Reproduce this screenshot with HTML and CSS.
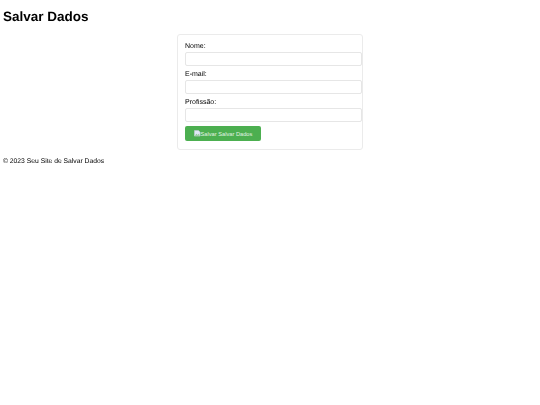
FILE: index.html
```html
<!DOCTYPE html>
<html lang="pt">
<head>
<meta charset="utf-8">
<title>Salvar Dados</title>
<link rel="stylesheet" href="styles.css">
</head>
<body>
<header class="top"><h1>Salvar Dados</h1></header>
<main>
<form class="card">
<label for="nome">Nome:</label>
<input id="nome" type="text">
<label for="email">E-mail:</label>
<input id="email" type="text">
<label for="prof">Profissão:</label>
<input id="prof" type="text">
<button type="button"><svg class="broken" viewBox="0 0 8 8" width="6.5" height="6.5"><path d="M0.5 0.5H5.5L7.5 2.5V7.5H0.5Z" fill="#dfe7f5" stroke="#c4c9d2" stroke-width="0.7"/><path d="M1 7L3 4.5L4.5 6L6 4.5L7 7Z" fill="#8fc78f"/></svg><span>Salvar Salvar Dados</span></button>
</form>
</main>
<footer class="foot">© 2023 Seu Site de Salvar Dados</footer>
</body>
</html>
```
FILE: styles.css
```css
html, body { margin: 0; padding: 0; background: #fff; }
body { font-family: "Liberation Sans", Arial, sans-serif; color: #000; text-rendering: geometricPrecision; }
.top { padding: 8px 3px 0; }
h1 { margin: 0; font-size: 13.5px; line-height: 17px; font-weight: 700; will-change: opacity; }
main { padding-top: 9px; }
.card {
  box-sizing: border-box;
  width: 186px;
  height: 116px;
  margin: 0 auto;
  padding: 7px 0 0 7px;
  border: 1px solid #ebebeb;
  border-radius: 3px;
  display: flex;
  flex-direction: column;
  align-items: flex-start;
}
label { font-size: 7px; line-height: 10px; height: 10px; color: #000; will-change: opacity; }
input {
  box-sizing: border-box;
  display: block;
  width: 177px;
  height: 14px;
  margin: 0 0 4px;
  padding: 0;
  border: 1px solid #e6e6e6;
  border-radius: 2px;
  background: #fff;
}
button {
  box-sizing: border-box;
  width: 76px;
  height: 15px;
  margin: 0;
  padding: 0 0 0 9px;
  border: 0;
  border-radius: 2px;
  background: #4caf50;
  color: #e4f3e4;
  font-family: inherit;
  font-size: 5.7px;
  display: flex;
  align-items: center;
  will-change: opacity;
}
.broken { flex: none; }
.foot { margin-top: 7px; padding-left: 3px; font-size: 6.75px; line-height: 9px; color: #000; will-change: opacity; }
```
